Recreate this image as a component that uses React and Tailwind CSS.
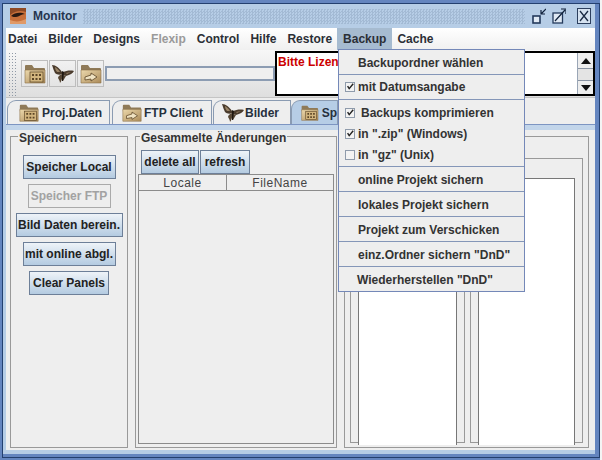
import React from 'react';

const menus = ['Datei', 'Bilder', 'Designs', 'Flexip', 'Control', 'Hilfe', 'Restore', 'Backup', 'Cache'];

const sideButtons = [
  { label: 'Speicher Local', w: 'w-[93px]' },
  { label: 'Speicher FTP', w: 'w-[83px]', off: true },
  { label: 'Bild Daten berein.', w: 'w-[107px]' },
  { label: 'mit online abgl.', w: 'w-[93px]' },
  { label: 'Clear Panels', w: 'w-[80px]' },
];

function FolderIcon({ size = 24, arrow = false }) {
  return (
    <svg width={size} height={size} viewBox="0 0 24 24">
      <defs>
        <linearGradient id="fold" x1="0" y1="0" x2="1" y2="1">
          <stop offset="0" stopColor="#ecd9ad" />
          <stop offset="1" stopColor="#ab8a58" />
        </linearGradient>
      </defs>
      <path d="M2 4q0-1 1-1h6l2 3h10q1 0 1 1v3H2z" fill="#8f7a58" />
      <path d="M2 8h20v13H2z" fill="url(#fold)" stroke="#8a6f48" strokeWidth="0.6" />
      {arrow ? (
        <path d="M6 15l6-2v-2l6 4-6 4v-2l-6 1z" fill="#efe2c2" stroke="#5b4526" strokeWidth="0.8" />
      ) : (
        <g>
          <rect x="7" y="10" width="13" height="10" fill="#d2b57e" stroke="#5b4526" strokeWidth="0.7" />
          <path d="M9 12h2v2H9zM12.500 12h2v2h-2zM16 12h2v2h-2zM9 16h2v2H9zM12.500 16h2v2h-2zM16 16h2v2h-2z" fill="#5b4526" />
        </g>
      )}
    </svg>
  );
}

function Butterfly({ size = 24 }) {
  return (
    <svg width={size} height={size} viewBox="0 0 24 24">
      <path d="M11 10C8 6 5 3 1 3c1 3 2 6 3 8 2 2 5 2 7 1z" fill="#4a3b2c" />
      <path d="M12 10c3-1 7-2 11-1-1 2-4 4-8 5l-3-1z" fill="#4a3b2c" />
      <path d="M11 12c-2 1-4 2-4 4 1 2 2 3 2 5 1-1 2-4 3-7z" fill="#564634" />
      <path d="M12 13l3 1c-1 2-2 3-3 5z" fill="#564634" />
      <path d="M4 5c2 1 4 3 5 5l-3 0C5 9 4 7 4 5zM15 11l5-1-4 2z" fill="#9a8467" />
      <path d="M11 9l2 1-1 9h-1z" fill="#1f1710" />
    </svg>
  );
}

function TitleButtons() {
  return (
    <div className="flex items-center pr-[1px]">
      <svg width="14" height="18" viewBox="0 0 14 18" className="mr-[6px]">
        <rect x="1" y="9" width="7" height="7" fill="#dfe9f4" stroke="#243a5c" strokeWidth="1.600" />
        <path d="M14 2L9 7M9 3v4h4" fill="none" stroke="#10213b" strokeWidth="1.200" />
      </svg>
      <svg width="14" height="18" viewBox="0 0 14 18" className="mr-[11px]">
        <rect x="1" y="6" width="9.500" height="10" fill="#dfe9f4" stroke="#243a5c" strokeWidth="1.300" />
        <path d="M3 14L13 3M9 2h5v5" fill="none" stroke="#10213b" strokeWidth="1.200" />
      </svg>
      <svg width="14" height="16" viewBox="0 0 14 16">
        <rect x="0.500" y="0.500" width="13" height="15" fill="#d5e2f0" stroke="#2c3f5e" />
        <path d="M3 3l8 10M11 3l-8 10" stroke="#1a2a44" strokeWidth="1.300" />
      </svg>
    </div>
  );
}

function Check({ on }) {
  return (
    <span className="w-[10px] h-[10px] shrink-0 border border-[#8f9bab] bg-[#f3f3f3] flex items-center justify-center">
      {on && (
        <svg width="10" height="10" viewBox="0 0 10 10">
          <path d="M2 4l2 3 5-6" fill="none" stroke="#222" strokeWidth="1.800" />
        </svg>
      )}
    </span>
  );
}

function MenuRow({ children, height = 'h-[24px]', line = true, pad = 'pl-[19px]' }) {
  return (
    <div className={`${height} ${pad} flex items-center ${line ? 'border-b border-[#8496b8]' : ''}`}>
      {children}
    </div>
  );
}

function BackupMenu() {
  return (
    <div className="absolute left-[338px] top-[49px] w-[187px] h-[243px] border border-[#7488b8] bg-[#eeeeee] text-[#333]">
      <MenuRow height="h-[25px]" pad="pl-[19px] pt-[2px]">Backupordner wählen</MenuRow>
      <MenuRow height="h-[25px]" pad="pl-[6px]">
        <Check on />
        <span className="ml-[3px]">mit Datumsangabe</span>
      </MenuRow>
      <MenuRow line={false} height="h-[25px]" pad="pl-[6px]">
        <Check on />
        <span className="ml-[6px]">Backups komprimieren</span>
      </MenuRow>
      <MenuRow line={false} height="h-[20px]" pad="pl-[6px] pb-[2px]">
        <Check on />
        <span className="ml-[3px]">in ".zip" (Windows)</span>
      </MenuRow>
      <MenuRow height="h-[22px]" pad="pl-[6px] pb-[2px]">
        <Check />
        <span className="ml-[3px]">in "gz" (Unix)</span>
      </MenuRow>
      <MenuRow height="h-[25px]" pad="pl-[19px] pt-[2px]">online Projekt sichern</MenuRow>
      <MenuRow height="h-[25px]" pad="pl-[19px] pt-[2px]">lokales Projekt sichern</MenuRow>
      <MenuRow height="h-[25px]" pad="pl-[19px] pt-[2px]">Projekt zum Verschicken</MenuRow>
      <MenuRow height="h-[25px]" pad="pl-[19px] pt-[2px]">einz.Ordner sichern "DnD"</MenuRow>
      <MenuRow line={false} height="h-[24px]" pad="pl-[18px] pt-[2px]">Wiederherstellen "DnD"</MenuRow>
    </div>
  );
}

function GrayButton({ children, className = '' }) {
  return (
    <button className={`h-[24px] flex items-center justify-center border border-[#6d7f98] bg-gradient-to-b from-[#eef3f8] to-[#b4cbe1] text-[#222] font-bold ${className}`}>
      {children}
    </button>
  );
}

function Tab({ children, className = '' }) {
  return (
    <div className={`h-[24px] flex items-center border border-b-0 border-[#8a9bb2] rounded-tl-[9px] ${className}`}>
      {children}
    </div>
  );
}

function Column({ className = '' }) {
  return (
    <div className={`h-[285px] border border-[#999] pl-[7px] pr-[7px] pt-[19px] ${className}`}>
      <div className="h-[267px] bg-white border border-b-0 border-[#777]" />
    </div>
  );
}

export default function App() {
  return (
    <div className="relative w-[602px] h-[460px] overflow-hidden bg-[#f4f4f4] pr-[2px] font-['Liberation_Sans',Arial,sans-serif] text-[12px] font-bold leading-none">
      <div className="h-full bg-[#6485bf] pt-[3px] pl-[2px] pb-[2px]">
        <div className="h-full border border-[#24406f] bg-[#6485bf] pr-[4px] pb-[3px]">
          <div className="h-full flex flex-col bg-[#b6cde6] pl-[3px] pb-[4px]">
            {/* title bar */}
            <div className="h-[24px] shrink-0 flex items-center pl-[4px] pr-[3px] text-[#26364f]">
              <svg width="16" height="16" viewBox="0 0 16 16" className="shrink-0">
                <rect width="16" height="16" fill="#c8703a" />
                <path d="M0 0h16v4C10 2 5 3 0 7z" fill="#8f4a24" />
                <path d="M1 8c4-4 10-4 14-2-4 0-6 3-9 3-2 0-3 0-5-1z" fill="#2a1a12" />
                <path d="M0 12c5 2 10 2 16-1v5H0z" fill="#e09a68" />
              </svg>
              <span className="ml-[7px] mr-[6px]">Monitor</span>
              <div className="flex-1 h-[15px] bg-[conic-gradient(#a3bad4_25%,transparent_0_50%,#a3bad4_0_75%,transparent_0)] bg-[length:3px_3px]" />
              <div className="ml-[7px]">
                <TitleButtons />
              </div>
            </div>

            {/* menu bar */}
            <div className="h-[22px] shrink-0 flex gap-[11px] bg-gradient-to-b from-white to-[#f0f0f0] pl-[2px] text-[#2b2f36]">
              {menus.map((m) => (
                <div
                  key={m}
                  className={`flex items-center ${m === 'Flexip' ? 'text-[#9a9a9a]' : ''} ${m === 'Backup' ? 'bg-[#a6bbd0] px-[6px] -mx-[6px]' : ''}`}
                >
                  {m}
                </div>
              ))}
            </div>

            {/* toolbar */}
            <div className="h-[48px] shrink-0 flex items-center bg-gradient-to-b from-[#f7f7f7] to-[#dedede] border-b border-[#c4c4c4] pl-[2px]">
              <div className="w-[9px] h-[44px] mr-[4px] bg-[radial-gradient(circle,#8f99a6_0.8px,transparent_1px)] bg-[length:3px_3px]" />
              <div className="flex gap-[1px]">
                <div className="w-[27px] h-[27px] border border-[#bdbdbd] flex items-center justify-center"><FolderIcon size={24} /></div>
                <div className="w-[27px] h-[27px] border border-[#bdbdbd] flex items-center justify-center"><Butterfly size={24} /></div>
                <div className="w-[27px] h-[27px] border border-[#bdbdbd] flex items-center justify-center"><FolderIcon size={24} arrow /></div>
              </div>
              <div className="w-[170px] h-[15px] ml-[1px] border-2 border-[#8c9cb2] bg-[#efefef]" />
              <div className="flex-1 h-[45px] bg-white border-2 border-black flex">
                <div className="flex-1 pt-[3px] pl-[1px] text-[#cc0000]">
                  <div className="w-[61px] overflow-hidden whitespace-nowrap">Bitte Lizens</div>
                </div>
                <div className="w-[16px] flex flex-col border-l border-[#9aa6b6] bg-[#eeeeee]">
                  <div className="h-[16px] border-b border-[#8a94a3] flex items-center justify-center">
                    <svg width="10" height="6" viewBox="0 0 10 6"><path d="M0 6l5-6 5 6z" fill="#111" /></svg>
                  </div>
                  <div className="h-[11px] bg-[#e4e4e4]" />
                  <div className="flex-1 border-t border-[#8a94a3] flex items-center justify-center">
                    <svg width="10" height="6" viewBox="0 0 10 6"><path d="M0 0l5 6 5-6z" fill="#111" /></svg>
                  </div>
                </div>
              </div>
            </div>

            {/* tabs */}
            <div className="h-[27px] shrink-0 flex items-end bg-[#eeeeee] pl-[1px] border-b border-[#7d95c2] text-[#26303d]">
              <Tab className="w-[103px] pl-[10px] mr-[2px]">
                <FolderIcon size={22} />
                <span className="ml-[2px]">Proj.Daten</span>
              </Tab>
              <Tab className="w-[100px] pl-[8px] mr-[1px]">
                <FolderIcon size={22} arrow />
                <span className="ml-[1px]">FTP Client</span>
              </Tab>
              <Tab className="w-[78px] pl-[7px]">
                <Butterfly size={24} />
                <span className="ml-[0px]">Bilder</span>
              </Tab>
              <Tab className="w-[47px] pl-[8px] bg-[#b6cde6]">
                <FolderIcon size={22} />
                <span className="ml-[2px]">Sp</span>
              </Tab>
            </div>

            {/* tab body */}
            <div className="flex-1 min-h-0 bg-[#eeeeee] border-t-[5px] border-[#c2d5ea] flex pl-[4px] pt-[6px] pb-[2px] gap-[7px] text-[#333]">
              <div className="w-[118px] border border-[#999] flex flex-col items-center">
                <span className="-mt-[5px] self-start ml-[7px] px-[1px] bg-[#eeeeee]">Speichern</span>
                <div className="mt-[11px] flex flex-col items-center gap-[5px]">
                  {sideButtons.map((b) =>
                    b.off ? (
                      <div key={b.label} className={`h-[24px] flex items-center justify-center border border-[#aaa] text-[#a2a2a2] ${b.w}`}>
                        {b.label}
                      </div>
                    ) : (
                      <GrayButton key={b.label} className={b.w}>{b.label}</GrayButton>
                    )
                  )}
                </div>
              </div>

              <div className="w-[202px] border border-[#999] flex flex-col pl-[2px] pr-[2px] pb-[3px]">
                <span className="-mt-[5px] self-start ml-[2px] px-[1px] bg-[#eeeeee] whitespace-nowrap">Gesammelte Änderungen</span>
                <div className="flex mt-[6px] ml-[3px] gap-[1px] text-[12px]">
                  <GrayButton className="w-[58px]">delete all</GrayButton>
                  <GrayButton className="w-[50px]">refresh</GrayButton>
                </div>
                <div className="flex-1 border-l border-b border-r border-[#8b8b8b] flex flex-col">
                  <div className="h-[17px] flex border-t border-b border-[#8b8b8b] font-normal tracking-[0.5px] text-[#444]">
                    <div className="w-[88px] flex items-center justify-center border-r border-[#8b8b8b]">Locale</div>
                    <div className="flex-1 flex items-center justify-center">FileName</div>
                  </div>
                </div>
              </div>

              <div className="w-[245px] border border-[#999] flex items-start gap-[5px] pl-[5px] pt-[21px]">
                <Column className="w-[115px]" />
                <Column className="w-[113px]" />
              </div>
            </div>
          </div>
        </div>
      </div>
      <BackupMenu />
    </div>
  );
}
